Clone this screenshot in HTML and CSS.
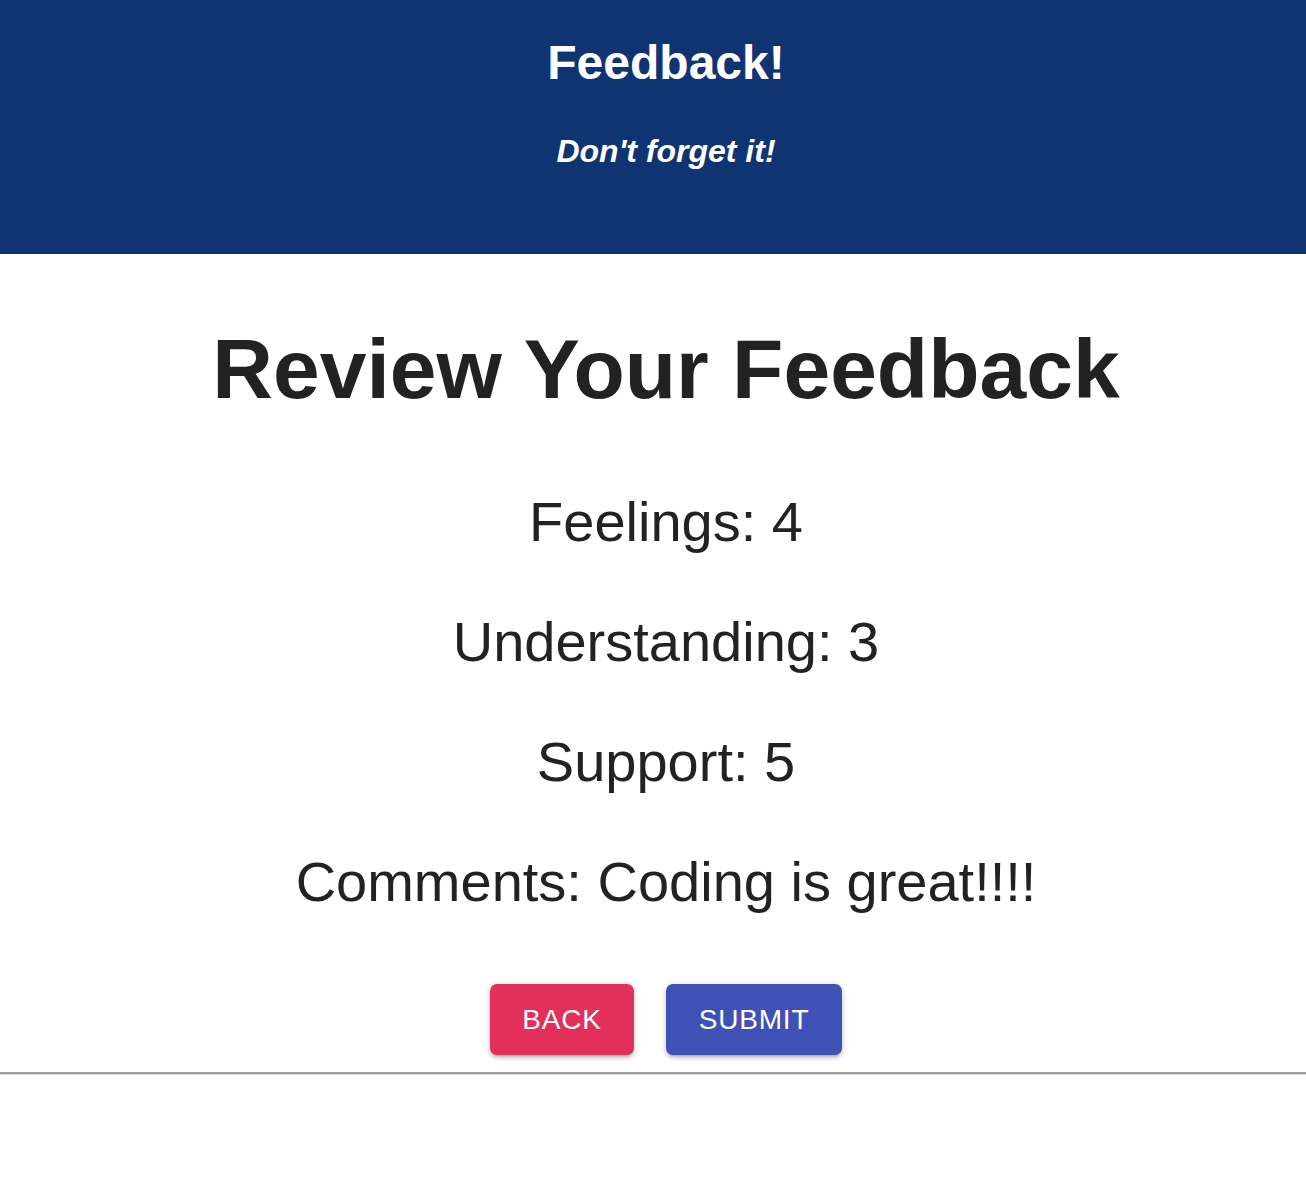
FILE: index.html
```html
<!DOCTYPE html>
<html lang="en">
<head>
<meta charset="utf-8">
<title>Feedback!</title>
<link rel="stylesheet" href="styles.css">
</head>
<body>
<header class="app-header">
  <h1 class="app-title">Feedback!</h1>
  <h4 class="app-subtitle">Don't forget it!</h4>
</header>
<main class="review">
  <h2 class="review-title">Review Your Feedback</h2>
  <div class="review-items">
    <p class="review-item">Feelings: 4</p>
    <p class="review-item">Understanding: 3</p>
    <p class="review-item">Support: 5</p>
    <p class="review-item">Comments: Coding is great!!!!</p>
  </div>
  <div class="actions">
    <button class="btn btn-back" type="button">Back</button>
    <button class="btn btn-submit" type="button">Submit</button>
  </div>
</main>
<hr class="divider">
</body>
</html>
```

FILE: styles.css
```css
html, body {
  margin: 0;
  padding: 0;
  background: #ffffff;
}
body {
  font-family: "Liberation Sans", Arial, Helvetica, sans-serif;
  color: #222222;
}
.app-header {
  background: #103372;
  height: 254px;
  box-sizing: border-box;
  padding: 35px 0 0 26px;
  text-align: center;
  color: #ffffff;
}
.app-title {
  margin: 0;
  font-size: 48px;
  line-height: 56px;
  font-weight: 700;
}
.app-subtitle {
  margin: 40px 0 0;
  font-size: 32px;
  line-height: 40px;
  font-weight: 700;
  font-style: italic;
}
.review {
  display: flex;
  flex-direction: column;
  align-items: center;
  text-align: center;
  padding-left: 26px;
}
.review-title {
  margin: 67px 0 0;
  font-size: 84px;
  line-height: 96px;
  font-weight: 700;
  color: #222222;
}
.review-items {
  margin-top: 73px;
  display: flex;
  flex-direction: column;
  gap: 56px;
}
.review-item {
  margin: 0;
  font-size: 56px;
  line-height: 64px;
  color: #222222;
}
.actions {
  margin-top: 70px;
  display: flex;
  gap: 32px;
}
.btn {
  height: 71px;
  padding: 0 32px;
  border: none;
  border-radius: 7px;
  font-family: "Liberation Sans", Arial, Helvetica, sans-serif;
  font-size: 28px;
  letter-spacing: 0.8px;
  text-transform: uppercase;
  color: #ffffff;
  cursor: pointer;
  box-shadow: 0 3px 3px -2px rgba(0,0,0,0.2), 0 3px 4px 0 rgba(0,0,0,0.14), 0 1px 8px 0 rgba(0,0,0,0.12);
}
.btn-back {
  width: 144px;
  background: #e3305a;
}
.btn-submit {
  width: 176px;
  background: #3f51b5;
}
.divider {
  margin: 17px 0 0;
  height: 0;
  border: none;
  border-top: 2px solid #a0a0a0;
  border-bottom: 1px solid #d6d6d6;
}
```
